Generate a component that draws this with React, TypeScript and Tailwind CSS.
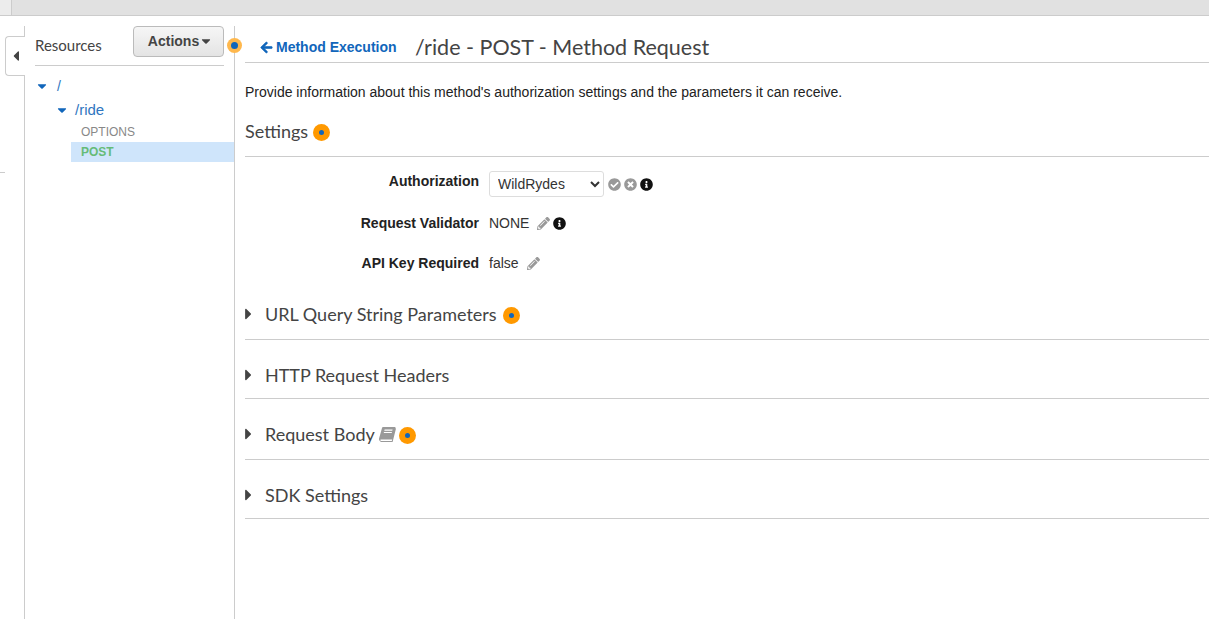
import React from 'react';
import { FaArrowLeft, FaCaretDown, FaCaretLeft, FaCaretRight, FaCheckCircle, FaInfoCircle, FaPencilAlt, FaTimesCircle } from 'react-icons/fa';

const arial = "font-['Liberation_Sans',Arial,sans-serif]";

const Dot = () => (
    <span className="flex h-[17px] w-[17px] shrink-0 items-center justify-center rounded-full bg-[#ff9900]">
        <span className="h-[5px] w-[5px] rounded-full bg-[#1166bb]" />
    </span>
);

// slanted book, the icon package only has the upright one
const BookIcon = () => (
    <svg viewBox="0 0 17 16" className="ml-[4px] h-[16px] w-[17px]" fill="#999999">
        <path d="M4 1h12.5l-3 12.5H2.2c-.7 0-.9.4-.9.7 0 .4.3.7.9.7h10.6l3.4-13 .8.5-3.4 13.5H2.2C.9 15.4 0 14.4 0 13.2c0-.4.1-.8.2-1.2L3 2c.2-.6.5-1 1-1z" />
        <path d="M5.6 3.6h8l-.3 1.1h-8zM5 6h8l-.3 1.1h-8z" fill="#ffffff" />
    </svg>
);

const sections = [
    { title: 'URL Query String Parameters', dot: true, book: false, top: 'pt-[29px]', bottom: 'pb-[13px]' },
    { title: 'HTTP Request Headers', dot: false, book: false, top: 'pt-[23px]', bottom: 'pb-[11px]' },
    { title: 'Request Body', dot: true, book: true, top: 'pt-[23px]', bottom: 'pb-[13px]' },
    { title: 'SDK Settings', dot: false, book: false, top: 'pt-[23px]', bottom: 'pb-[11px]' },
];

const App = () => {
    return (
        <div className={`relative h-[619px] w-[1209px] overflow-hidden bg-white text-[14px] text-[#333333] ${arial}`}>
            <div className="flex h-[16px] border-b border-[#cccccc] bg-[#e1e1e1]">
                <div className="h-full w-[12px] border-r border-[#cccccc] bg-[#ececec]" />
            </div>

            <div className="absolute left-0 top-[172px] h-px w-[5px] bg-[#cccccc]" />

            <div className="flex h-[603px]">
                <div className="w-[24px] shrink-0" />
                <aside className="mt-[10px] w-[211px] shrink-0 border-x border-[#cccccc]">
                    <div className="mx-[10px] flex h-[40px] items-start justify-between border-b border-[#cccccc]">
                        <span className="mt-[10px] font-['Lato',sans-serif] text-[15px] leading-[19px] text-[#444444]">Resources</span>
                        <button className="flex h-[31px] w-[91px] items-center justify-center rounded-[4px] border border-[#bbbbbb] bg-gradient-to-b from-[#f6f6f6] to-[#e4e4e4] pb-[1px] pl-[4px] text-[14px] font-bold text-[#444444]">
                            Actions
                            <FaCaretDown className="text-[14px] text-[#444444]" />
                        </button>
                    </div>
                    <div className="mt-[10px] flex h-[20px] items-center pl-[10px] text-[14px] text-[#2f76c0]">
                        <FaCaretDown className="text-[14px] text-[#1166bb]" />
                        <span className="ml-[8px]">/</span>
                    </div>
                    <div className="mt-[4px] flex h-[20px] items-center pl-[30px] text-[15px] text-[#2f76c0]">
                        <FaCaretDown className="text-[14px] text-[#1166bb]" />
                        <span className="ml-[6px]">/ride</span>
                    </div>
                    <div className="ml-[46px] mt-[2px] flex h-[20px] items-center pl-[10px] text-[12px] text-[#888888]">OPTIONS</div>
                    <div className="ml-[46px] flex h-[20px] items-center bg-[#cfe5fb] pl-[10px] text-[12px] font-bold text-[#66bb77]">POST</div>
                </aside>

                <main className="min-w-0 flex-1 pl-[10px]">
                    <div className="flex h-[47px] items-end border-b border-[#cccccc]">
                        <a className="mb-[4px] ml-[15px] flex w-[155px] items-center text-[14px] font-bold text-[#1166bb]">
                            <FaArrowLeft className="mr-[3px] stroke-[24] text-[13px]" />
                            Method Execution
                        </a>
                        <h1 className="font-['Lato',sans-serif] text-[21.5px] leading-[30px] text-[#444444]">/ride - POST - Method Request</h1>
                    </div>

                    <p className="mt-[21px] leading-[16px] text-[#222222]">Provide information about this method's authorization settings and the parameters it can receive.</p>

                    <div className="mt-[19px] flex h-[38px] items-start gap-[5px] border-b border-[#cccccc]">
                        <h2 className="font-['Lato',sans-serif] text-[18px] leading-[24px] text-[#444444]">Settings</h2>
                        <span className="mt-[5px]"><Dot /></span>
                    </div>

                    <div className="mt-[14px] flex h-[26px] items-center">
                        <label className="mb-[5px] w-[234px] text-right font-bold text-[#222222]">Authorization</label>
                        <select defaultValue="WildRydes" className="ml-[10px] h-[26px] w-[115px] rounded-[3px] border border-[#dddddd] bg-white pl-[4px] text-[14px] text-[#333333]">
                            <option>WildRydes</option>
                        </select>
                        <FaCheckCircle className="ml-[4px] text-[13px] text-[#999999]" />
                        <FaTimesCircle className="ml-[3px] text-[13px] text-[#999999]" />
                        <FaInfoCircle className="ml-[3px] text-[13px] text-[#111111]" />
                    </div>

                    <div className="mt-[16px] flex h-[20px] items-center">
                        <label className="w-[234px] text-right font-bold text-[#222222]">Request Validator</label>
                        <span className="ml-[10px]">NONE</span>
                        <FaPencilAlt className="ml-[8px] text-[13px] text-[#999999]" />
                        <FaInfoCircle className="ml-[3px] text-[13px] text-[#111111]" />
                    </div>

                    <div className="mt-[20px] flex h-[20px] items-center">
                        <label className="w-[234px] text-right font-bold text-[#222222]">API Key Required</label>
                        <span className="ml-[10px]">false</span>
                        <FaPencilAlt className="ml-[8px] text-[13px] text-[#999999]" />
                    </div>

                    {sections.map((item) => (
                        <div key={item.title} className={`flex items-center border-b border-[#cccccc] ${item.top} ${item.bottom}`}>
                            <FaCaretRight className="mr-[13px] h-[18px] w-[7px] text-[#444444]" />
                            <h3 className="font-['Lato',sans-serif] text-[18px] leading-[24px] text-[#444444]">{item.title}</h3>
                            {item.book && <BookIcon />}
                            {item.dot && <span className={item.book ? 'ml-[3px] mt-[3px]' : 'ml-[6px] mt-[2px]'}><Dot /></span>}
                        </div>
                    ))}
                </main>
            </div>

            {/* tab that collapses the resource list */}
            <div className="absolute left-[5px] top-[36px] flex h-[40px] w-[20px] items-center justify-center rounded-l-[4px] border border-r-0 border-[#cccccc] bg-white">
                <FaCaretLeft className="text-[16px] text-[#444444]" />
            </div>

            <div className="absolute left-[227px] top-[38px] flex h-[15px] w-[15px] items-center justify-center rounded-full bg-[#ffb84d]">
                <span className="h-[7px] w-[7px] rounded-full bg-[#1166bb]" />
            </div>
        </div>
    );
};
export default App;
